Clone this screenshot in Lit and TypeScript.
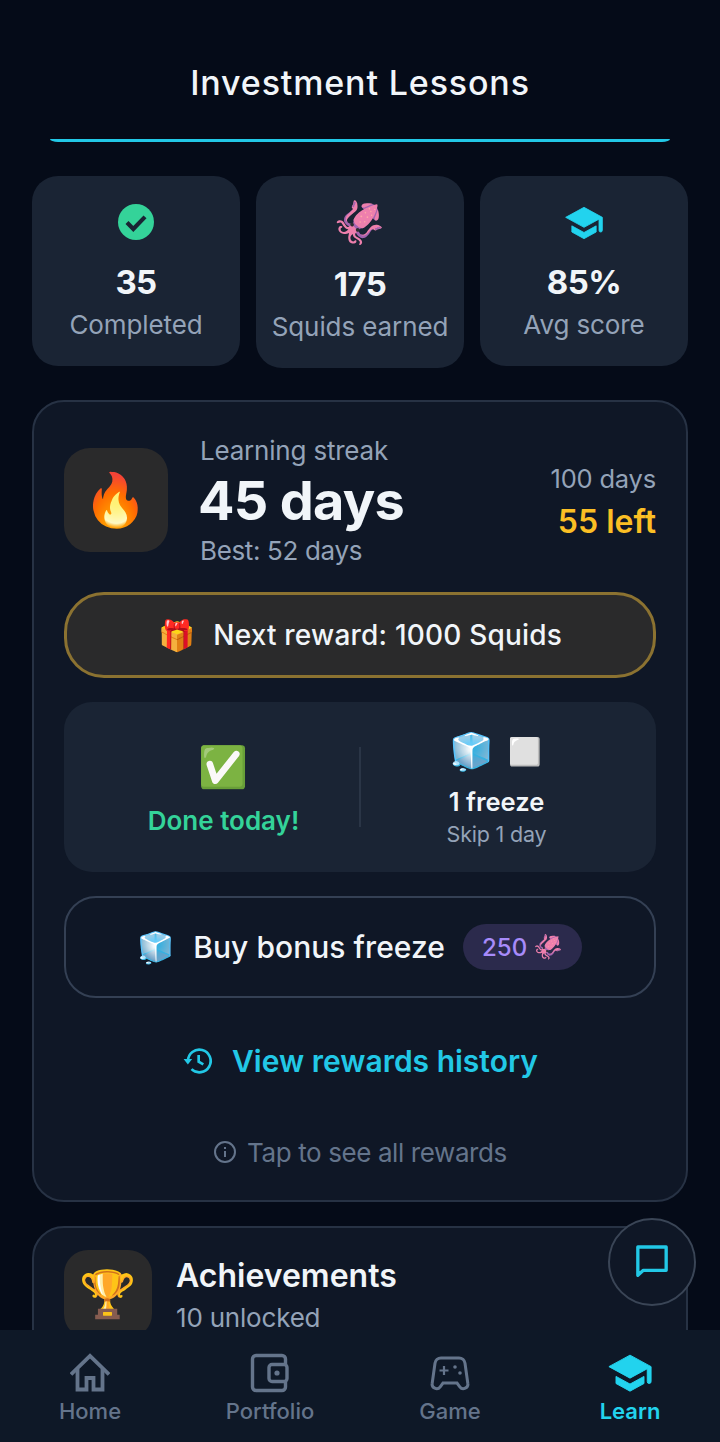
import { LitElement, html, css, svg } from "lit";
import { customElement } from "lit/decorators.js";

const school = svg`<path fill="currentColor" stroke="currentColor" stroke-width=".5" stroke-linejoin="round" d="M12 3.200 1 9.200l11 6 9-4.900V17a1 1 0 0 0 2 0V9.200Z"/><path fill="currentColor" stroke="currentColor" stroke-width=".5" stroke-linejoin="round" d="M4.700 14.300V18l7.300 4 7.300-4v-3.700L12 18.300Z"/>`;

@customElement("app-root")
export class AppRoot extends LitElement {
  static styles = css`
    :host { display: block; width: 720px; height: 1442px; overflow: hidden; position: relative; background: #050b18; color: #f1f5f9; font-family: Inter, "Noto Color Emoji", sans-serif; }
    * { box-sizing: border-box; }
    .page { height: 1442px; display: flex; flex-direction: column; }
    .scroll { flex: 1; min-height: 0; overflow: hidden; padding: 0 32px; display: flex; flex-direction: column; gap: 24px; }
    .em { font-family: "Noto Color Emoji", sans-serif; font-weight: 400; letter-spacing: 0; }
    .header { margin: 0 18px; height: 142px; padding-top: 63px; text-align: center; font-size: 34px; line-height: 40px; font-weight: 500; letter-spacing: 0.85px; border-bottom: 3px solid #22c8e6; border-radius: 0 0 8px 8px / 0 0 3px 3px; flex: none; }
    .stats { display: flex; gap: 16px; align-items: flex-start; margin: 10px 0 8px; flex: none; }
    .stat { flex: 1; background: #1a2434; border-radius: 26px; padding: 24px 0 0; height: 190px; display: flex; flex-direction: column; align-items: center; }
    .stat.tall { height: 192px; padding-top: 23px; }
    .stat svg { display: block; width: 36px; height: 36px; margin: 4px 0; }
    .stat svg.cap { width: 40px; height: 40px; margin: 2px 0; }
    .stat .emo { font-size: 42px; line-height: 48px; height: 48px; }
    .num { font-size: 33px; line-height: 40px; font-weight: 700; margin-top: 18px; letter-spacing: -0.6px; }
    .tall .num { margin-top: 17px; }
    .lab { font-size: 26px; line-height: 30px; color: #94a3b8; margin-top: 8px; letter-spacing: -0.1px; white-space: nowrap; }
    .card { background: #0f1726; border: 2px solid #273244; border-radius: 32px; flex: none; }
    .streak { padding: 34px 30px 0; height: 802px; display: flex; flex-direction: column; }
    .top { display: flex; align-items: center; gap: 32px; height: 128px; }
    .ibox { width: 104px; height: 104px; border-radius: 26px; background: #2a2a2b; display: flex; align-items: center; justify-content: center; font-size: 52px; flex: none; }
    .info { flex: 1; }
    .l1 { font-size: 26px; line-height: 32px; color: #94a3b8; letter-spacing: -0.2px; }
    .l2 { font-size: 54px; line-height: 62px; font-weight: 700; margin-top: 3px; letter-spacing: -0.7px; margin-left: -2px; }
    .l3 { font-size: 26px; line-height: 30px; color: #94a3b8; margin-top: 4px; letter-spacing: -0.35px; }
    .right { text-align: right; padding-top: 4px; }
    .r1 { font-size: 25.5px; line-height: 32px; color: #94a3b8; letter-spacing: -0.2px; }
    .r2 { font-size: 32px; line-height: 40px; font-weight: 600; color: #fbbf24; margin-top: 7px; }
    .reward { margin-top: 28px; height: 86px; border: 3px solid #8b7231; border-radius: 40px; background: #2a2a2b; display: flex; align-items: center; justify-content: center; gap: 18px; font-size: 28px; font-weight: 500; letter-spacing: 0.2px; }
    .reward .em { font-size: 30px; }
    .panel { margin-top: 24px; height: 170px; border-radius: 28px; background: #1a2434; display: flex; align-items: center; padding: 0 24px; }
    .half { flex: 1; display: flex; flex-direction: column; align-items: center; padding-top: 4px; }
    .half.rt { padding-top: 2px; }
    .vr { width: 2px; height: 80px; background: #2a3546; flex: none; }
    .check { font-size: 40px; line-height: 54px; }
    .done { font-size: 26px; line-height: 32px; font-weight: 600; color: #34d399; margin-top: 10px; }
    .ices { display: flex; gap: 14px; align-items: center; height: 48px; font-size: 36px; line-height: 48px; margin-left: -2px; }
    .ices .w { font-size: 27px; }
    .fz { font-size: 25.5px; line-height: 32px; font-weight: 600; margin-top: 10px; }
    .sk { font-size: 21.5px; line-height: 28px; color: #94a3b8; margin-top: 2px; letter-spacing: -0.2px; }
    .buy { margin-top: 24px; height: 102px; border: 2px solid #344054; border-radius: 32px; display: flex; align-items: center; justify-content: center; gap: 18px; font-size: 30px; font-weight: 500; letter-spacing: 0.05px; }
    .buy > .em { font-size: 30px; }
    .pill { height: 46px; border-radius: 23px; background: #2b2a4c; color: #a78bfa; font-size: 24px; font-weight: 500; display: flex; align-items: center; gap: 6px; padding: 0 19px; }
    .pill .em { font-size: 24px; }
    .hist { margin-top: 44px; display: flex; align-items: center; justify-content: center; gap: 18px; height: 38px; color: #22c8e6; font-size: 30px; font-weight: 600; }
    .hist svg { width: 32px; height: 32px; }
    .tap { margin-top: 56px; display: flex; align-items: center; justify-content: center; gap: 10px; height: 32px; color: #64748b; font-size: 26px; letter-spacing: -0.4px; }
    .tap svg { width: 24px; height: 24px; }
    .ach { height: 180px; padding: 22px 30px; display: flex; gap: 24px; position: relative; }
    .ach .ibox { width: 88px; height: 88px; font-size: 46px; border-radius: 24px; }
    .a1 { font-size: 32px; line-height: 40px; font-weight: 600; margin-top: 6px; }
    .a2 { font-size: 26px; line-height: 24px; color: #94a3b8; margin-top: 10px; letter-spacing: -0.2px; }
    .chev { width: 32px; height: 32px; margin: 22px 4px 0 auto; color: #64748b; flex: none; }
    .nav { height: 112px; flex: none; background: #0e1827; display: grid; grid-template-columns: repeat(4, 180px); position: relative; }
    .it { display: flex; flex-direction: column; align-items: center; padding-top: 23px; color: #64748b; font-size: 22px; line-height: 28px; font-weight: 500; }
    .it svg { width: 40px; height: 40px; margin-bottom: 4px; }
    .it svg.cap { width: 46px; height: 46px; margin: -4px 0 2px; }
    .it.on { color: #22d3ee; font-weight: 600; }
    .fab { position: absolute; left: 608px; top: 1218px; width: 88px; height: 88px; border-radius: 50%; background: #0f1726; border: 2px solid #3a4556; color: #22c8e6; display: flex; align-items: center; justify-content: center; }
    .fab svg { width: 40px; height: 40px; }
  `;
  render() {
    return html`<div class="page">
      <div class="scroll">
        <div class="header">Investment Lessons</div>
        <div class="stats">
          <div class="stat">
            <svg viewBox="0 0 24 24"><circle cx="12" cy="12" r="12" fill="#34d399"/><path d="M6 12.400l4.200 4.200 7.800-8" fill="none" stroke="#1a2434" stroke-width="2.800"/></svg>
            <div class="num">35</div><div class="lab">Completed</div>
          </div>
          <div class="stat tall">
            <div class="emo em">🦑</div>
            <div class="num">175</div><div class="lab">Squids earned</div>
          </div>
          <div class="stat" style="color:#22d3ee">
            <svg class="cap" viewBox="0 0 24 24">${school}</svg>
            <div class="num" style="color:#f1f5f9">85%</div><div class="lab">Avg score</div>
          </div>
        </div>
        <div class="card streak">
          <div class="top">
            <div class="ibox em">🔥</div>
            <div class="info"><div class="l1">Learning streak</div><div class="l2">45 days</div><div class="l3">Best: 52 days</div></div>
            <div class="right"><div class="r1">100 days</div><div class="r2">55 left</div></div>
          </div>
          <div class="reward"><span class="em">🎁</span><span>Next reward: 1000 Squids</span></div>
          <div class="panel">
            <div class="half"><div class="check em">✅</div><div class="done">Done today!</div></div>
            <div class="vr"></div>
            <div class="half rt"><div class="ices"><span class="em">🧊</span><span class="em w">⬜</span></div><div class="fz">1 freeze</div><div class="sk">Skip 1 day</div></div>
          </div>
          <div class="buy"><span class="em">🧊</span><span>Buy bonus freeze</span><span class="pill">250 <span class="em">🦑</span></span></div>
          <div class="hist">
            <svg viewBox="0 0 24 24" fill="none" stroke="currentColor" stroke-width="2"><path d="M4.500 12a8.500 8.500 0 1 1 2.600 6.100"/><path d="M1.200 10.500h6.400L4.400 14.600Z" fill="currentColor" stroke="none"/><path d="M12.500 7.500v5l3.500 2"/></svg>
            <span>View rewards history</span>
          </div>
          <div class="tap">
            <svg viewBox="0 0 24 24" fill="none" stroke="currentColor" stroke-width="2"><circle cx="12" cy="12" r="10"/><path d="M12 11v6M12 7v2"/></svg>
            <span>Tap to see all rewards</span>
          </div>
        </div>
        <div class="card ach">
          <div class="ibox em">🏆</div>
          <div><div class="a1">Achievements</div><div class="a2">10 unlocked</div></div>
          <svg class="chev" viewBox="0 0 24 24" fill="none" stroke="currentColor" stroke-width="2.500"><path d="M9 6l6 6-6 6"/></svg>
        </div>
      </div>
      <div class="nav">
        <div class="it"><svg viewBox="0 0 40 40" fill="none" stroke="currentColor" stroke-width="3.800"><path d="M1 21.500 20 3l19 18.500"/><path d="M7.500 16v20.500h9V25h7v11.500h9V16"/></svg>Home</div>
        <div class="it"><svg viewBox="0 0 40 40" fill="none" stroke="currentColor" stroke-width="3.400" stroke-linejoin="round"><rect x="2.500" y="2.500" width="33" height="35" rx="3.500"/><rect x="19" y="11.500" width="18" height="17" rx="3" fill="#0e1827"/><circle cx="27" cy="20" r="2.600" fill="currentColor" stroke="none"/></svg>Portfolio</div>
        <div class="it"><svg viewBox="0 0 40 40" fill="none" stroke="currentColor" stroke-width="3"><path d="M11 5h18a6 6 0 0 1 6 5.200l2.800 20a4.500 4.500 0 0 1-8 3.600L27 30H13l-2.800 3.800a4.500 4.500 0 0 1-8-3.600L5 10.200A6 6 0 0 1 11 5Z"/><path d="M9.500 17.500h9M14 13v9" stroke-width="2.200"/><circle cx="25" cy="14" r="1.800" fill="currentColor" stroke="none"/><circle cx="30" cy="20" r="1.800" fill="currentColor" stroke="none"/></svg>Game</div>
        <div class="it on"><svg class="cap" viewBox="0 0 24 24">${school}</svg>Learn</div>
      </div>
      <div class="fab"><svg viewBox="0 0 24 24" fill="none" stroke="currentColor" stroke-width="2" stroke-linejoin="round"><path d="M3.500 3h17v14H6.800L3.500 20Z"/></svg></div>
    </div>`;
  }
}
